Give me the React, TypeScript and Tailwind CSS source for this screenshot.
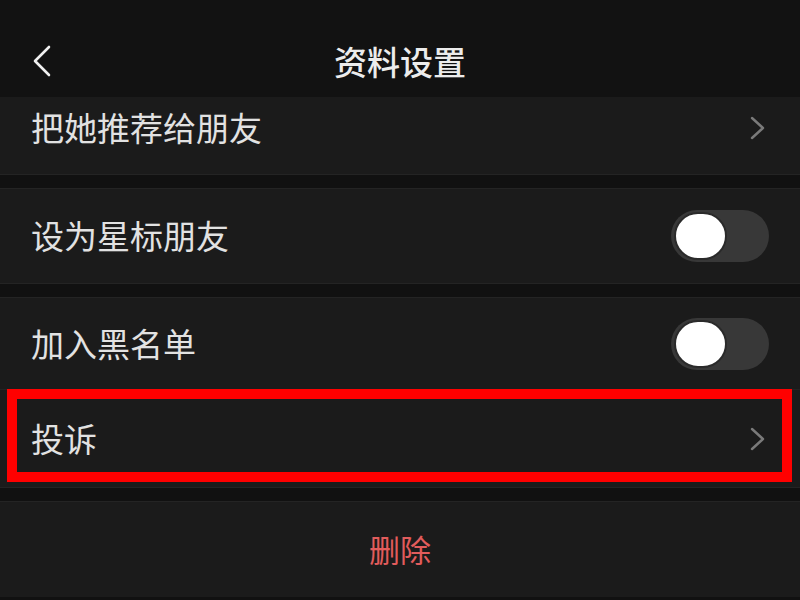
import React from 'react';

const font = { fontFamily: '"Noto Sans CJK SC", "Noto Sans", sans-serif' };

const ChevronRight: React.FC = () => (
  <svg width="18" height="24" viewBox="0 0 18 24" fill="none">
    <path d="M3 2 L14 12 L3 22" stroke="#7a7a7a" strokeWidth="2.4" strokeLinecap="round" strokeLinejoin="round" />
  </svg>
);

const Toggle: React.FC = () => (
  <div className="flex h-[52px] w-[98px] items-center rounded-full bg-[#383838] pl-[3px]">
    <div className="h-[48px] w-[53px] rounded-full border-2 border-[#2a2a2a] bg-white" />
  </div>
);

const Band: React.FC = () => (
  <div className="h-[15px] border-y border-[#242424] bg-[#111111]" />
);

const App: React.FC = () => {
  return (
    <div className="flex h-[600px] w-[800px] flex-col overflow-hidden bg-[#111111]" style={font}>
      {/* header */}
      <div className="relative flex h-[97px] shrink-0 items-center justify-center bg-[#121212] pt-[27px]">
        <svg className="absolute left-[30px] top-[44px]" width="24" height="34" viewBox="0 0 24 34" fill="none">
          <path d="M19 3 L5 17 L19 31" stroke="#f0f0f0" strokeWidth="2.6" strokeLinecap="round" strokeLinejoin="round" />
        </svg>
        <span className="text-[33px] font-medium text-[#ececec]">资料设置</span>
      </div>

      <div className="flex h-[77px] shrink-0 items-center justify-between bg-[#1b1b1b] pl-[31px] pr-[33px]">
        <span className="mt-[-16px] text-[33px] text-[#e2e2e2]">把她推荐给朋友</span>
        <div className="mt-[-16px]">
          <ChevronRight />
        </div>
      </div>

      <Band />

      <div className="flex h-[94px] shrink-0 items-center justify-between bg-[#1b1b1b] pl-[31px] pr-[31px]">
        <span className="text-[33px] text-[#e2e2e2]">设为星标朋友</span>
        <Toggle />
      </div>

      <Band />

      <div className="flex h-[92px] shrink-0 items-center justify-between border-b border-[#242424] bg-[#1b1b1b] pl-[31px] pr-[31px]">
        <span className="text-[33px] text-[#e2e2e2]">加入黑名单</span>
        <Toggle />
      </div>

      <div className="relative flex h-[97px] shrink-0 items-center justify-between bg-[#1b1b1b] pl-[31px] pr-[33px]">
        <span className="text-[33px] text-[#e2e2e2]">投诉</span>
        <ChevronRight />
        <div className="absolute left-[7px] top-[-1px] h-[93px] w-[785px] border-[10px] border-[#ff0000]" />
      </div>

      <Band />

      <div className="flex h-[95px] shrink-0 items-center justify-center bg-[#1b1b1b]">
        <span className="text-[31px] text-[#e25c5c]">删除</span>
      </div>
    </div>
  );
};

export default App;
